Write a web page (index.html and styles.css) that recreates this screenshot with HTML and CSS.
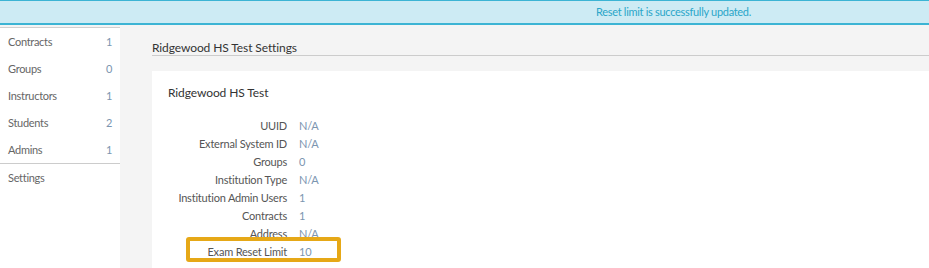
FILE: index.html
```html
<!DOCTYPE html>
<html lang="en">
<head>
    <meta charset="UTF-8">
    <meta name="viewport" content="width=device-width, initial-scale=1.0">
    <title>Ridgewood HS Test Settings</title>
    <link rel="stylesheet" href="styles.css">
</head>
<body>
    <div class="alert">Reset limit is successfully updated.</div>
    <div class="layout">
        <ul class="sidebar">
            <li><span>Contracts</span><span class="count">1</span></li>
            <li><span>Groups</span><span class="count">0</span></li>
            <li><span>Instructors</span><span class="count">1</span></li>
            <li><span>Students</span><span class="count">2</span></li>
            <li><span>Admins</span><span class="count">1</span></li>
            <li class="active"><span>Settings</span></li>
        </ul>
        <div class="main">
            <h1>Ridgewood HS Test Settings</h1>
            <div class="card">
                <h2>Ridgewood HS Test</h2>
                <dl class="details">
                    <div class="row"><dt>UUID</dt><dd>N/A</dd></div>
                    <div class="row"><dt>External System ID</dt><dd>N/A</dd></div>
                    <div class="row"><dt>Groups</dt><dd>0</dd></div>
                    <div class="row"><dt>Institution Type</dt><dd>N/A</dd></div>
                    <div class="row"><dt>Institution Admin Users</dt><dd>1</dd></div>
                    <div class="row"><dt>Contracts</dt><dd>1</dd></div>
                    <div class="row"><dt>Address</dt><dd>N/A</dd></div>
                    <div class="row highlight"><dt>Exam Reset Limit</dt><dd>10</dd></div>
                </dl>
            </div>
        </div>
    </div>
</body>
</html>
```

FILE: styles.css
```css
body {
    font-family: Lato, "Open Sans", sans-serif;
    font-size: 11px;
    letter-spacing: -0.2px;
    margin: 0;
    padding: 0;
    background-color: #f4f4f4;
    color: #555;
    overflow: hidden;
}
.alert {
    height: 22px;
    line-height: 22px;
    padding-left: 596px;
    background-color: #cdebf4;
    border-top: 1px solid #3cb4d4;
    border-bottom: 2px solid #3cb4d4;
    color: #2aa6c9;
    letter-spacing: -0.3px;
}
.layout {
    display: flex;
    margin-top: 2px;
}
.sidebar {
    list-style: none;
    margin: 0;
    padding: 0;
    width: 120px;
    flex-shrink: 0;
    min-height: 241px;
    background-color: #fff;
    border-top: 1px solid #d0d0d0;
}
.sidebar li {
    display: flex;
    justify-content: space-between;
    height: 27px;
    line-height: 27px;
    padding: 0 8px;
    color: #666;
    letter-spacing: -0.3px;
}
.sidebar .count {
    color: #7b95b0;
}
.sidebar .active {
    border-top: 1px solid #ccc;
}
.main {
    flex: 1;
    padding-left: 32px;
}
h1 {
    font-size: 12px;
    font-weight: normal;
    letter-spacing: -0.1px;
    color: #333;
    margin: 0;
    padding-top: 13px;
    height: 15px;
    line-height: 16px;
    border-bottom: 1px solid #ccc;
}
.card {
    margin-top: 15px;
    background-color: #fff;
    padding: 14px 16px 10px;
    min-height: 180px;
}
h2 {
    font-size: 12px;
    font-weight: normal;
    letter-spacing: -0.1px;
    color: #333;
    margin: 0 0 16px;
    line-height: 16px;
}
.details {
    margin: 0;
}
.row {
    display: flex;
    height: 18px;
    line-height: 18px;
    position: relative;
    white-space: nowrap;
}
.row dt {
    width: 119px;
    flex-shrink: 0;
    text-align: right;
}
.row dd {
    margin-left: 12px;
    color: #7b95b0;
}
.highlight::after {
    content: "";
    position: absolute;
    left: 18px;
    top: -6px;
    width: 147px;
    height: 17px;
    border: 4px solid #e6a817;
    border-radius: 3px;
}
```
